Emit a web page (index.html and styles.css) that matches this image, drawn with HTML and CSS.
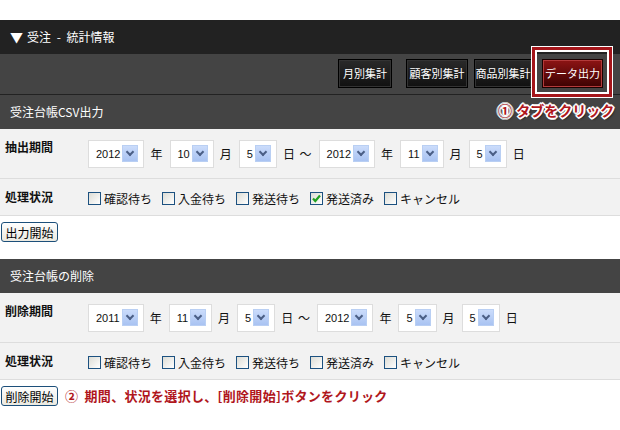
FILE: index.html
```html
<!DOCTYPE html>
<html lang="ja">
<head>
<meta charset="UTF-8">
<title>受注 - 統計情報</title>
<link rel="stylesheet" href="styles.css">
</head>
<body>

<div class="page">

<div class="title"><span class="tri">▼</span>受注 - 統計情報</div>

<div class="tabs">
<span class="tab w1">月別集計</span>
<span class="tab w2">顧客別集計</span>
<span class="tab w3">商品別集計</span>
<span class="tab active">データ出力</span>
<div class="mark"></div>
</div>

<div class="sechead">受注台帳CSV出力</div>
<div class="note1">① タブをクリック</div>

<div class="row period">
<div class="label">抽出期間</div>
<div class="fields">
<span class="sel">2012<i class="arr"></i></span><span>年</span>
<span class="sel">10<i class="arr"></i></span><span>月</span>
<span class="sel">5<i class="arr"></i></span><span class="til">日 ～</span>
<span class="sel">2012<i class="arr"></i></span><span>年</span>
<span class="sel">11<i class="arr"></i></span><span>月</span>
<span class="sel">5<i class="arr"></i></span><span>日</span>
</div>
</div>

<div class="row status">
<div class="label">処理状況</div>
<div class="checks">
<label><span class="cb"></span>確認待ち</label>
<label><span class="cb"></span>入金待ち</label>
<label><span class="cb"></span>発送待ち</label>
<label><span class="cb on"><svg width="11" height="11" viewBox="0 0 11 11"><path d="M2 5.5 L4.3 8 L9 2.5" fill="none" stroke="#21a121" stroke-width="2.2"/></svg></span>発送済み</label>
<label><span class="cb"></span>キャンセル</label>
</div>
</div>

<div class="act"><button class="btn">出力開始</button></div>

<div class="sechead sec2">受注台帳の削除</div>

<div class="row period">
<div class="label">削除期間</div>
<div class="fields">
<span class="sel">2011<i class="arr"></i></span><span>年</span>
<span class="sel">11<i class="arr"></i></span><span>月</span>
<span class="sel">5<i class="arr"></i></span><span class="til">日 ～</span>
<span class="sel">2012<i class="arr"></i></span><span>年</span>
<span class="sel">5<i class="arr"></i></span><span>月</span>
<span class="sel">5<i class="arr"></i></span><span>日</span>
</div>
</div>

<div class="row status">
<div class="label">処理状況</div>
<div class="checks">
<label><span class="cb"></span>確認待ち</label>
<label><span class="cb"></span>入金待ち</label>
<label><span class="cb"></span>発送待ち</label>
<label><span class="cb"></span>発送済み</label>
<label><span class="cb"></span>キャンセル</label>
</div>
</div>

<div class="act">
<button class="btn">削除開始</button>
<span class="note2">② 期間、状況を選択し、[削除開始]ボタンをクリック</span>
</div>

</div>

</body>
</html>
```

FILE: styles.css
```css
body{
margin:0;
background:#fff;
font-family:"Noto Sans CJK JP","Liberation Sans",sans-serif;
font-size:12px;
color:#111;
}

.page{
position:relative;
width:620px;
padding-top:20px;
}

.title{
background:#222;
color:#fff;
height:34px;
line-height:33px;
padding-left:10px;
font-size:12px;
word-spacing:3px;
}
.tri{
font-size:13px;
margin-right:4px;
}

.tabs{
background:#444;
height:40px;
border-bottom:1px solid #222;
display:flex;
justify-content:flex-end;
align-items:flex-start;
padding-right:17px;
position:relative;
}

.tab{
margin-top:5px;
height:27px;
line-height:26px;
border:1px solid #000;
box-shadow:inset 0 0 0 1px #333;
background:linear-gradient(#2a2a2a,#111);
color:#fff;
font-size:11px;
text-align:center;
margin-left:6px;
}
.w1{width:52px;margin-right:8px}
.w2{width:60px}
.w3{width:56px}
.tab.active{
width:59px;
margin-left:10px;
border-color:#1a0000;
box-shadow:inset 0 0 0 1px #b33a3a;
background:linear-gradient(#8e1414,#3c0202);
}

.mark{
position:absolute;
left:532px;
top:-7px;
width:74px;
height:44px;
border:3px solid #a5161b;
outline:1px solid #fff;
box-shadow:inset 0 0 0 2px #fff;
z-index:2;
}

.sechead{
background:#444;
color:#fff;
height:34px;
line-height:33px;
padding-left:10px;
font-size:12px;
}

.note1{
position:absolute;
left:498px;
top:100px;
color:#b0161c;
font-size:14px;
font-weight:bold;
word-spacing:1px;
text-shadow:
-2px 0 #fff,2px 0 #fff,0 -2px #fff,0 2px #fff,
-1px -1px #fff,1px 1px #fff,-1px 1px #fff,1px -1px #fff,
2px 2px 2px rgba(0,0,0,0.5);
z-index:3;
}

.row{
background:#f2f2f2;
border-bottom:1px solid #ddd;
display:flex;
}

.label{
width:83px;
padding-left:5px;
font-weight:bold;
font-size:12px;
}

.period{height:49px}
.period .label{padding-top:9px}

.fields{
display:flex;
align-items:center;
gap:6px;
}
.fields > span:not(.sel){
margin-right:1px;
}
.til{word-spacing:2px}

.sel{
display:inline-flex;
align-items:center;
justify-content:flex-end;
min-width:23px;
height:26px;
padding:0 5px 0 7px;
border:1px solid #ddd;
background:#fff;
font-family:"Liberation Sans",sans-serif;
font-size:11px;
}

.arr{
display:inline-block;
width:14px;
height:15px;
margin-left:2px;
border:1px solid #b9cff3;
background:linear-gradient(#cbdcfb,#a9c3f2);
position:relative;
}
.arr:after{
content:"";
position:absolute;
left:4px;
top:3px;
width:4px;
height:4px;
border-right:2px solid #4b5f86;
border-bottom:2px solid #4b5f86;
transform:rotate(45deg);
}

.status{
height:36px;
align-items:center;
}
.status .label{margin-top:-2px}

.checks{
display:flex;
align-items:center;
gap:10px;
padding-top:2px;
}
.checks label{
display:flex;
align-items:center;
}

.cb{
width:11px;
height:11px;
border:1px solid #1c5180;
background:linear-gradient(135deg,#dcdcd5,#fff);
margin-right:3px;
display:inline-flex;
align-items:center;
justify-content:center;
}

.act{
padding:6px 0 0 1px;
height:30px;
display:flex;
align-items:flex-start;
}
.sec2{margin-top:7px}

.btn{
font-family:"Noto Sans CJK JP",sans-serif;
font-size:12px;
height:20px;
width:57px;
padding:0;
line-height:17px;
border:1px solid #1c4f7a;
border-radius:3px;
background:linear-gradient(#fefefe,#ebe9e0);
color:#000;
}

.note2{
margin-left:7px;
color:#b0161c;
font-weight:bold;
font-size:13px;
line-height:20px;
word-spacing:3px;
letter-spacing:0.3px;
}
```
